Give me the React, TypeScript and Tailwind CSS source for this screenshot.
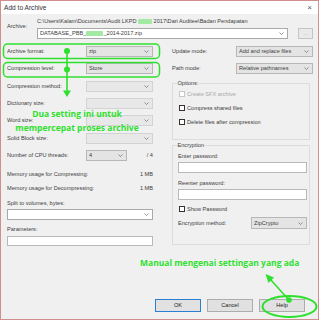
import clsx from "clsx";

function Chevron() {
    return (
        <svg width="5" height="3" viewBox="0 0 10 6" className="shrink-0">
            <path d="M1 1l4 4 4-4" fill="none" stroke="#6a6a6a" strokeWidth="1.4" />
        </svg>
    );
}

function Combo({ className, text, disabled, editable }: { className?: string; text?: React.ReactNode; disabled?: boolean; editable?: boolean }) {
    return (
        <div className={clsx(
            "flex items-center h-[11px] border pl-[2px] pr-[3px] shrink-0",
            editable ? "bg-white border-[#a9a9a9]" : disabled ? "bg-[#e8e8e8] border-[#d3d3d3]" : "bg-[#e4e4e4] border-[#b7b7b7]",
            className
        )}>
            <span className="flex-1 whitespace-nowrap overflow-hidden">{text}</span>
            <Chevron />
        </div>
    );
}

function Blob({ className }: { className: string }) {
    return <span className={clsx("inline-block h-[5px] bg-[#a3e8a3] rounded-[1px] blur-[0.4px] align-middle", className)} />;
}

function Row({ label, children }: { label: string; children?: React.ReactNode }) {
    return (
        <div className="h-[17.3px] flex items-center">
            <div className="flex-1">{label}</div>
            {children}
        </div>
    );
}

function Check({ label, disabled }: { label: string; disabled?: boolean }) {
    return (
        <div className={clsx("h-[14px] flex items-center gap-[2px]", disabled && "text-[#a8a8a8]")}>
            <span className={clsx("w-[6px] h-[6px] border bg-white", disabled ? "border-[#c8c8c8]" : "border-[#333]")} />
            {label}
        </div>
    );
}

function Btn({ label, primary }: { label: string; primary?: boolean }) {
    return (
        <div className={clsx("w-[46px] h-[13px] flex items-center justify-center border bg-[#e1e1e1]", primary ? "border-[#2b7fd0]" : "border-[#adadad]")}>
            {label}
        </div>
    );
}

export default function App() {
    const green = "#2ee02e";
    return (
        <div className="relative w-[319px] h-[320px] font-['Liberation_Sans',Arial,sans-serif] text-[5.6px] leading-[7px] text-[#3c3c3c]">
            <div className="w-full h-full border border-[#cf8f8f] bg-[#f0f0f0] flex flex-col">
                <div className="h-[13px] bg-white flex items-center justify-between pl-[3px] pr-[6px] text-[6.6px] text-[#333]">
                    <span>Add to Archive</span>
                    <span className="text-[8px] text-[#555]">×</span>
                </div>

                <div className="flex-1 flex flex-col pl-[6px] pt-[3.5px]">
                    <div className="flex items-start">
                        <div className="w-[30px] mt-[5px]">Archive:</div>
                        <div className="w-[276px] flex flex-col">
                            <div className="h-[7px] whitespace-nowrap">
                                C:\Users\Kalam\Documents\Audit LKPD <Blob className="w-[14px]" /> 2017\Dari Auditee\Badan Pendapatan
                            </div>
                            <div className="flex mt-[3.5px]">
                                <Combo editable className="w-[251px]" text={<>DATABASE_PBB_<Blob className="w-[17px]" />_2014-2017.zip</>} />
                                <div className="ml-auto w-[15px] h-[11px] border border-[#c4c4c4] bg-[#e9e9e9] text-[#a8a8a8] flex items-center justify-center">...</div>
                            </div>
                        </div>
                    </div>

                    <div className="flex mt-[4px] gap-[19px]">
                        <div className="w-[146px] flex flex-col">
                            <Row label="Archive format:"><Combo className="w-[67px]" text="zip" /></Row>
                            <Row label="Compression level:"><Combo className="w-[67px]" text="Store" /></Row>
                            <Row label="Compression method:"><Combo disabled className="w-[67px]" /></Row>
                            <Row label="Dictionary size:"><Combo disabled className="w-[67px]" /></Row>
                            <Row label="Word size:"><Combo disabled className="w-[67px]" /></Row>
                            <Row label="Solid Block size:"><Combo disabled className="w-[67px]" /></Row>
                            <Row label="Number of CPU threads:">
                                <Combo className="w-[41px]" text="4" />
                                <span className="w-[26px] text-right">/ 4</span>
                            </Row>
                            <div className="mt-[3px] h-[14px] flex items-center justify-between">
                                <span>Memory usage for Compressing:</span><span>1 MB</span>
                            </div>
                            <div className="h-[14px] flex items-center justify-between">
                                <span>Memory usage for Decompressing:</span><span>1 MB</span>
                            </div>
                            <div className="mt-[4.5px]">Split to volumes, bytes:</div>
                            <Combo editable className="mt-[2.5px] w-full" />
                            <div className="mt-[5.5px]">Parameters:</div>
                            <div className="mt-[3.5px] h-[10px] border border-[#b9b9b9] bg-white" />
                        </div>

                        <div className="w-[141px] flex flex-col">
                            <Row label="Update mode:"><Combo className="w-[77px]" text="Add and replace files" /></Row>
                            <Row label="Path mode:"><Combo className="w-[77px]" text="Relative pathnames" /></Row>
                            <fieldset className="mt-[2px] w-[138px] border border-[#dcdcdc] pl-[6px] pr-[2px] pb-[10px]">
                                <legend className="-ml-[2px] px-[0.5px]">Options:</legend>
                                <div className="pt-[0.5px]">
                                    <Check disabled label="Create SFX archive" />
                                    <Check label="Compress shared files" />
                                    <Check label="Delete files after compression" />
                                </div>
                            </fieldset>
                            <fieldset className="mt-[1.5px] w-[138px] border border-[#dcdcdc] pl-[5px] pr-[2px] pb-[14px]">
                                <legend className="-ml-[1px] px-[0.5px]">Encryption</legend>
                                <div className="mt-[4px]">Enter password:</div>
                                <div className="mt-[2.5px] h-[11px] border border-[#b9b9b9] bg-white" />
                                <div className="mt-[6.5px]">Reenter password:</div>
                                <div className="mt-[2.5px] h-[11px] border border-[#b9b9b9] bg-white" />
                                <div className="mt-[2px] pl-[1px]"><Check label="Show Password" /></div>
                                <div className="h-[14px] flex items-center">
                                    <span className="flex-1">Encryption method:</span>
                                    <Combo className="w-[56px] h-[12px]" text="ZipCrypto" />
                                </div>
                            </fieldset>
                        </div>
                    </div>

                    <div className="mt-auto pb-[7px] pr-[13px] flex justify-end gap-[6px] text-[#222]">
                        <Btn primary label="OK" />
                        <Btn label="Cancel" />
                        <Btn label="Help" />
                    </div>
                </div>
            </div>

            <svg className="absolute left-0 top-0 pointer-events-none" width="319" height="320" viewBox="0 0 319 320">
                <rect x="3.5" y="44" width="156" height="14.5" rx="4" fill="none" stroke={green} strokeWidth="1.5" />
                <rect x="3.5" y="62.5" width="156" height="14.5" rx="4" fill="none" stroke={green} strokeWidth="1.5" />
                <line x1="67" y1="51" x2="67" y2="91" stroke={green} strokeWidth="1.6" />
                <circle cx="67" cy="51" r="3" fill={green} />
                <circle cx="67" cy="69.5" r="3" fill={green} />
                <polygon points="63,90.5 71,90.5 67,97" fill={green} />
                <ellipse cx="289.5" cy="306.5" rx="27" ry="10.5" fill="none" stroke={green} strokeWidth="2" />
                <line x1="289" y1="300" x2="270" y2="279" stroke={green} strokeWidth="1.6" />
                <circle cx="289" cy="300" r="2.8" fill={green} />
                <polygon points="265.5,274 274,277.5 268.5,283" fill={green} />
            </svg>

            <div className="absolute left-0 top-[107px] w-[154px] text-center font-['Open_Sans',sans-serif] font-bold text-[8.5px] leading-[14px] text-[#2ee02e] pointer-events-none">
                <div>Dua setting ini untuk</div>
                <div>mempercepat proses archive</div>
            </div>
            <div className="absolute left-[140px] top-[256px] whitespace-nowrap font-['Open_Sans',sans-serif] font-bold text-[8.5px] leading-[14px] text-[#2ee02e] pointer-events-none">
                Manual mengenai settingan yang ada
            </div>
        </div>
    );
}
